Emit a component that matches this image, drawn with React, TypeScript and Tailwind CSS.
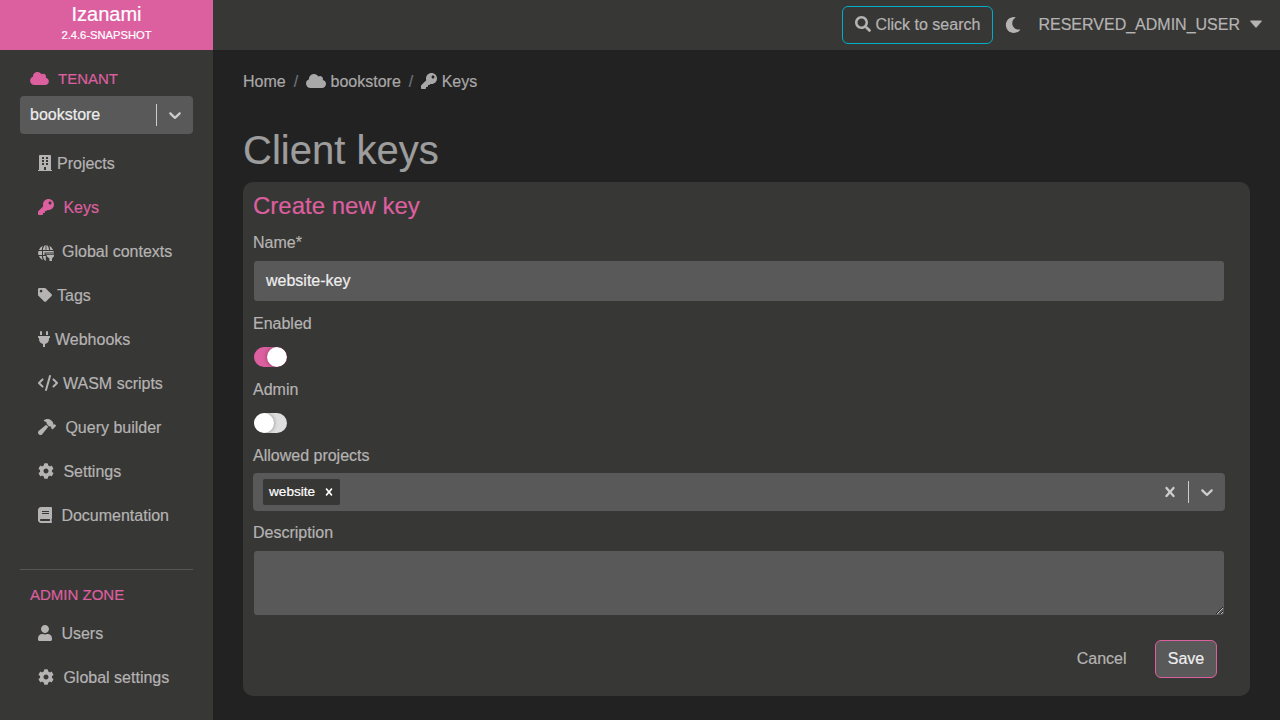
import type { ComponentType, ReactNode } from "react";
import { FaBook, FaBuilding, FaCloud, FaCog, FaKey, FaMoon, FaPlug, FaSearch, FaTag, FaUser } from "react-icons/fa";
import { FaCode, FaHammer } from "react-icons/fa6";

type IconType = ComponentType<{ className?: string }>;

function ContextsIcon({ className }: { className?: string }) {
  return (
    <svg viewBox="0 0 16 16" fill="currentColor" className={className}>
      <path d="M4.7.8A8 8 0 0 0 .9 4.900h2.900C4 3.300 4.300 1.900 4.700.8zM7.600.1C6.300.5 5.300 2.300 4.800 4.900h2.800zM8.400.1v4.800h2.800C10.700 2.300 9.700.5 8.400.1zM11.300.8c.4 1.100.7 2.500.9 4.100h2.900A8 8 0 0 0 11.300.8z" />
      <path d="M.4 6H4v4H.4A8 8 0 0 1 .4 6zM5 6h10.600l.3 1.500H6.500V10H5zM7.500 8.600H16v.6H7.500z" />
      <path d="M.9 11h2.900c.2 1.600.5 3 .9 4.200A8 8 0 0 1 .9 11zM4.900 11h2.900v5C6.300 15.500 5.300 13.600 4.900 11zM8.700 10H16v1.200l-2 2.300V16h-2.600v-2.500l-2.700-2.300z" />
    </svg>
  );
}

function Chevron() {
  return (
    <svg viewBox="0 0 20 20" fill="currentColor" className="size-5">
      <path d="M4.516 7.548c0.436-0.446 1.043-0.481 1.576 0l3.908 3.747 3.908-3.747c0.533-0.481 1.141-0.446 1.574 0 0.436 0.445 0.408 1.197 0 1.615-0.406 0.418-4.695 4.502-4.695 4.502-0.217 0.223-0.502 0.335-0.787 0.335s-0.570-0.112-0.789-0.335c0 0-4.287-4.084-4.695-4.502s-0.436-1.170 0-1.615z" />
    </svg>
  );
}

function Cross({ className }: { className?: string }) {
  return (
    <svg viewBox="0 0 20 20" fill="currentColor" className={className}>
      <path d="M14.348 14.849c-0.469 0.469-1.229 0.469-1.697 0l-2.651-3.030-2.651 3.029c-0.469 0.469-1.229 0.469-1.697 0-0.469-0.469-0.469-1.229 0-1.697l2.758-3.150-2.759-3.152c-0.469-0.469-0.469-1.228 0-1.697s1.228-0.469 1.697 0l2.652 3.031 2.651-3.031c0.469-0.469 1.228-0.469 1.697 0s0.469 1.229 0 1.697l-2.758 3.152 2.758 3.150c0.469 0.469 0.469 1.229 0 1.698z" />
    </svg>
  );
}

function NavItem({ icon: Icon, size, active, children }: { icon: IconType; size: string; active?: boolean; children: ReactNode }) {
  return (
    <li className={active ? "flex h-11 items-center pl-[38px] text-[#dc5f9f]" : "flex h-11 items-center pl-[38px] text-[#b5b3b3]"}>
      <Icon className={size} />
      <span className="pt-0.5">{children}</span>
    </li>
  );
}

function Toggle({ on }: { on?: boolean }) {
  return (
    <div
      className={
        on
          ? "ml-px flex h-5 w-[33px] justify-end overflow-hidden rounded-full bg-[#dc5f9f]"
          : "ml-px flex h-5 w-[33px] overflow-hidden rounded-full bg-[#dfdfdf]"
      }
    >
      <div className="size-5 rounded-full bg-white shadow-[0_0_4px_rgba(0,0,0,0.4)]" />
    </div>
  );
}

export default function App() {
  return (
    <div className="flex h-[720px] w-[1280px] flex-col overflow-hidden bg-[#222222] font-['Liberation_Sans',Arial,sans-serif] text-base text-[#b5b3b3] [-webkit-text-stroke:0.2px]">
      <header className="flex h-[50px] shrink-0 bg-[#373735]">
        <div className="flex w-[213px] flex-col items-center bg-[#dc5f9f] text-white">
          <span className="mt-px text-[20px] leading-[27px]">Izanami</span>
          <span className="text-[11.2px] leading-[14px]">2.4.6-SNAPSHOT</span>
        </div>
        <div className="flex flex-1 items-center justify-end pr-[18px]">
          <button className="flex h-[38px] w-[151px] items-center rounded-md border border-[#00aec9] pl-3">
            <FaSearch className="mr-1 mb-0.5 size-4" />
            Click to search
          </button>
          <FaMoon className="mr-0.5 ml-3 h-4 w-4" />
          <span className="ml-[15px]">RESERVED_ADMIN_USER</span>
          <svg viewBox="0 0 12 8" fill="currentColor" className="mb-0.5 ml-2.5 h-2 w-3">
            <path d="M.7.500h10.600q.8.200.3.900L6.700 7.300q-.7.700-1.400 0L.4 1.400Q-.1.700.7.500z" />
          </svg>
        </div>
      </header>

      <div className="flex min-h-0 flex-1">
        <aside className="w-[213px] shrink-0 bg-[#373735]">
          <div className="flex h-[46px] items-center pt-3 pl-[30px] text-[15px] text-[#dc5f9f]">
            <FaCloud className="mr-[9px] mb-0.5 h-[15px] w-[19px]" />
            TENANT
          </div>
          <div className="mx-5 flex h-[38px] items-center rounded-[4px] bg-[#595959] pl-2.5 text-[#eeeeee]">
            <span className="flex-1">bookstore</span>
            <span className="h-[22px] w-px bg-[#cccccc]" />
            <span className="px-2 text-[#cccccc]"><Chevron /></span>
          </div>
          <ul className="mt-[7px]">
            <NavItem icon={FaBuilding} size="mr-[5px] h-4 w-3.5">Projects</NavItem>
            <NavItem icon={FaKey} size="mr-[9.4px] size-4" active>Keys</NavItem>
            <NavItem icon={ContextsIcon} size="mt-1 mr-2 size-4">Global contexts</NavItem>
            <NavItem icon={FaTag} size="mr-[5px] h-4 w-3.5">Tags</NavItem>
            <NavItem icon={FaPlug} size="mr-[5px] h-4 w-3">Webhooks</NavItem>
            <NavItem icon={FaCode} size="mr-[5px] h-4 w-5">WASM scripts</NavItem>
            <NavItem icon={FaHammer} size="mr-[9.4px] h-4 w-[18px]">Query builder</NavItem>
            <NavItem icon={FaCog} size="mr-[9.4px] size-4">Settings</NavItem>
            <NavItem icon={FaBook} size="mr-[9.4px] h-4 w-3.5">Documentation</NavItem>
          </ul>
          <div className="mx-5 mt-8 h-px bg-[#565654]" />
          <div className="flex h-[41px] items-center pt-[9px] pl-[30px] text-[15px] text-[#dc5f9f]">ADMIN ZONE</div>
          <ul>
            <NavItem icon={FaUser} size="mr-[9.4px] h-4 w-3.5">Users</NavItem>
            <NavItem icon={FaCog} size="mr-[9.4px] size-4">Global settings</NavItem>
          </ul>
        </aside>

        <main className="flex-1 px-[30px] pt-[19px]">
          <nav className="flex h-6 items-center text-[#a9a8a8]">
            <span className="pt-0.5">Home</span>
            <span className="px-2 pt-0.5 text-[#6c757d]">/</span>
            <FaCloud className="mr-[4.4px] h-4 w-5" />
            <span className="pt-0.5">bookstore</span>
            <span className="px-2 pt-0.5 text-[#6c757d]">/</span>
            <FaKey className="mr-[4.4px] size-4" />
            <span className="pt-0.5">Keys</span>
          </nav>
          <h1 className="mt-[33px] h-14 text-[40px] leading-12 text-[#9d9d9d]">Client keys</h1>

          <section className="h-[514px] rounded-[10px] bg-[#373735] pt-2 pr-[25px] pl-2.5">
            <h2 className="h-[41px] text-[24px] leading-8 text-[#dc5f9f]">Create new key</h2>
            <label className="block h-[30px] leading-6">Name*</label>
            <div className="mx-px flex h-10 items-center rounded-[3px] bg-[#595959] pl-3 text-[#eeeeee]">website-key</div>
            <label className="mt-[11px] block h-[35px] leading-6">Enabled</label>
            <Toggle on />
            <label className="mt-[11px] block h-[35px] leading-6">Admin</label>
            <Toggle />
            <label className="mt-[11px] block h-[29px] leading-6">Allowed projects</label>
            <div className="flex h-[38px] items-center rounded-[4px] bg-[#595959] pl-2.5 text-[#cccccc]">
              <div className="flex h-[26px] w-[77px] items-center rounded-[2px] bg-[#373735] pl-1.5 text-[13.6px] text-white">
                <span className="flex-1">website</span>
                <Cross className="mr-1 size-3.5" />
              </div>
              <span className="flex-1" />
              <Cross className="mr-2 size-5" />
              <span className="h-[22px] w-px bg-[#cccccc]" />
              <span className="px-2"><Chevron /></span>
            </div>
            <label className="mt-[10px] block h-[30px] leading-6">Description</label>
            <textarea className="mx-px block h-16 w-[970px] resize-y rounded-[3px] bg-[#595959]" />
            <div className="mt-[25px] flex items-center justify-end pr-2">
              <button className="h-[38px] px-[28.5px]">Cancel</button>
              <button className="h-[38px] w-[62px] rounded-md border border-[#dc5f9f] bg-[#595959] text-[#eeeeee]">Save</button>
            </div>
          </section>
        </main>
      </div>
    </div>
  );
}
